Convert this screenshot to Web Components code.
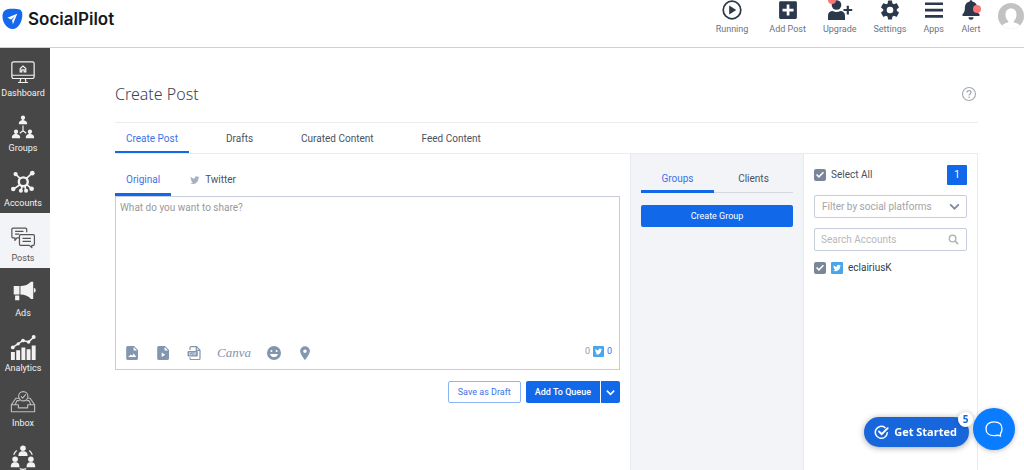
<!DOCTYPE html>
<html lang="en">
<head>
<meta charset="utf-8">
<meta name="viewport" content="width=device-width, initial-scale=1">
<title>SocialPilot - Create Post</title>
<style>
  html, body { margin: 0; height: 100%; }
  body {
    --blue: #1169ea;
    --link: #3c73ea;
    --ink: #485261;
    --muted: #999;
    --line: #c8cddb;
    --soft: #ebecf0;
    --panel: #f3f4f7;
    --tool: #8296b0;
    font: 10px/16px Roboto, "Liberation Sans", sans-serif;
    color: var(--ink);
    background: #fff;
    overflow: hidden;
  }
</style>
</head>
<body>
<sp-app></sp-app>

<script>
const person = (x, y) => `<circle cx="${x}" cy="${y}" r="2.3"/><path d="M${x - 4.5} ${y + 7}c0-3 1-4 3.2-4.4L${x - 1} ${y + 1}h2l-.3 1.6c2.600.4 3.800 1.400 3.800 4.400z"/>`;
const BIRD = 'M23.6 4.900a10 10 0 0 1-2.800.8 4.900 4.900 0 0 0 2.100-2.700c-1 .6-2 1-3.100 1.200a4.900 4.900 0 0 0-8.400 4.500A14 14 0 0 1 1.300 3.500a4.900 4.900 0 0 0 1.500 6.600c-.8 0-1.600-.2-2.200-.6a4.900 4.900 0 0 0 3.900 4.900c-.7.2-1.500.2-2.200.1a4.900 4.900 0 0 0 4.600 3.400A9.900 9.900 0 0 1-.4 20a14 14 0 0 0 21.500-12.400c1-.8 1.800-1.700 2.500-2.700z';
const ICONS = {
  logo: ['0 0 22 22', '<path d="M11 .3c6.500 0 10.300.3 10.300 6.300 0 7-4 14.900-10.300 14.900S.5 14.500.5 8.200C.5 1.600 4.500.3 11 .3z" fill="#1568ee"/><path d="M16 5.500 5.600 9.800l4 1.600L13.500 8l-2.900 4.400.8 4z" fill="#fff"/>'],
  running: ['0 0 20 20', '<circle cx="10" cy="10" r="8.800" fill="none" stroke="currentColor" stroke-width="1.700"/><path d="M7.200 5.600v8.800L14.300 10z"/>'],
  add: ['0 0 20 20', '<path fill-rule="evenodd" d="M2.500 1.200h15a1.400 1.400 0 0 1 1.400 1.400v15a1.400 1.400 0 0 1-1.400 1.400h-15a1.400 1.400 0 0 1-1.400-1.400v-15a1.400 1.400 0 0 1 1.400-1.400zM8.700 4.500v4.200H4.500v2.700h4.200v4.200h2.700v-4.200h4.200V8.700h-4.200V4.500z"/>'],
  upgrade: ['0 0 26 20', '<circle cx="9.500" cy="5" r="4.800"/><path d="M1 20v-4.300c0-3 2-4.600 4.600-4.600 1.300.7 2.500 1 3.900 1s2.600-.3 3.900-1c2.600 0 4.600 1.600 4.600 4.600V20zM19.700 5.700h2.200v3.200h3.300v2.200h-3.300v3.300h-2.200v-3.300h-3.200V8.900h3.200z"/>'],
  settings: ['0 0 24 24', '<path d="M20.100 13c.1-.6.1-1.300 0-2l2.300-1.800c.3-.2.4-.6.200-.9l-2.300-4c-.2-.3-.5-.4-.8-.3l-2.800 1.100c-.6-.5-1.200-.8-1.900-1.100l-.4-3a.7.700 0 0 0-.7-.5h-3.400c-.3 0-.6.200-.7.600l-.4 3c-.7.300-1.300.6-1.900 1.100L4.500 4a.7.700 0 0 0-.8.300l-2.300 4c-.2.300-.1.700.2.900L3.900 11v2l-2.300 1.800c-.3.200-.3.600-.2.900l2.300 4c.2.300.5.400.8.300l2.800-1.100c.6.5 1.200.8 1.900 1.100l.4 3c.1.300.4.500.7.500h3.400c.3 0 .6-.2.700-.5l.4-3c.7-.3 1.300-.6 1.900-1.100l2.800 1.100c.3.100.6 0 .8-.3l2.300-4c.2-.3.100-.7-.2-.9zM12 16a4 4 0 1 1 0-8 4 4 0 0 1 0 8z"/>'],
  apps: ['0 0 20 20', '<path d="M1 2.500h18v2.600H1zM1 8.800h18v2.600H1zM1 15.100h18v2.600H1z"/>'],
  alert: ['0 0 20 20', '<path d="M10 .2c.8 0 1.300.5 1.300 1.300 3 .6 4.800 2.900 4.800 5.800 0 4.200 1 5.700 2.300 7 .6.700.2 1.700-.8 1.700H2.400c-1 0-1.400-1-.8-1.700 1.300-1.300 2.300-2.800 2.300-7 0-2.900 1.800-5.200 4.800-5.800C8.700.7 9.200.2 10 .2zM7.500 17.300h5a2.500 2.500 0 0 1-5 0z"/>'],
  avatar: ['0 0 26 26', '<defs><clipPath id="c"><circle cx="13" cy="13" r="13"/></clipPath></defs><g clip-path="url(#c)"><path fill="#c2c2c2" d="M0 0h26v26H0z"/><path fill="#fff" d="M13 5.500c3.600 0 5.500 2.500 5.500 6 0 3-1.200 5.400-2.700 6.600v1.400c4 .8 7 2.200 7 6.500H3.200c0-4.300 3-5.700 7-6.500v-1.400c-1.500-1.200-2.700-3.600-2.700-6.600 0-3.500 1.900-6 5.500-6z"/></g>'],
  help: ['0 0 16 16', '<g fill="none" stroke="currentColor" stroke-width="1.100"><circle cx="8" cy="8" r="6.500"/><path d="M6 6.600c0-1.300.9-2 2-2s2 .7 2 1.800c0 1.400-1.900 1.600-1.900 3.100" stroke-width="1.300"/></g><circle cx="8.100" cy="11.300" r=".8"/>'],
  dashboard: ['0 0 28 26', '<g fill="none" stroke="currentColor" stroke-width="1.300"><rect x="2" y="2" width="24" height="18" rx="1.800"/><path d="M2 16.500h24M11.500 20l-.6 3.800M16.500 20l.6 3.800M8.700 24.300h10.600M11 12.800V9.300l3-2.700 3 2.700v3.500h-1.700v-2h-2.600v2z"/></g>'],
  groups: ['0 0 28 28', person(14, 4) + person(6.500, 19) + person(21.500, 19) + '<path d="M14 12.500v5.500M14 18l-3.500 2.800M14 18l3.500 2.800" fill="none" stroke="currentColor" stroke-width="1.300"/>'],
  accounts: ['0 0 28 28', '<g fill="none" stroke="currentColor"><circle cx="14.300" cy="13.800" r="4.800" stroke-width="2.600"/><path stroke-width="1.800" d="M10.800 10 6.500 6M17.700 10l5-4.500M10.600 17l-6 4.200M13 18.500l-1 4.500M16 18.500l1 4.500M18 16.500l4.500 4"/></g><circle cx="6" cy="5.500" r="2.300"/><circle cx="24" cy="4.500" r="2.500"/><circle cx="3.500" cy="21.500" r="2.400"/><circle cx="11.700" cy="23.500" r="2.200"/><circle cx="17.300" cy="23.500" r="2.200"/><circle cx="23.300" cy="21.300" r="2.500"/>'],
  posts: ['0 0 28 26', '<g fill="none" stroke="currentColor" stroke-width="1.300" stroke-linejoin="round"><path d="M10 14H7.500L5.300 16.700V14H3.300A1.300 1.300 0 0 1 2 12.700V4.800a1.300 1.300 0 0 1 1.300-1.300h13.400A1.300 1.300 0 0 1 18 4.800V8M5.500 7h9M5.500 10h4.500"/><path d="M11.500 10.500H25a1.300 1.300 0 0 1 1.300 1.300v8.900A1.300 1.300 0 0 1 25 22h-1.500v2.500L20.800 22h-9.300a1.300 1.300 0 0 1-1.300-1.300v-8.900a1.300 1.300 0 0 1 1.300-1.300zM13.500 14.500h9M13.500 17.700h9"/></g>'],
  ads: ['0 0 28 26', '<path d="M4 6.500h6.200v9.300H4zM11.200 6.500C16 6.500 20 5 22.500 2H25v18.500h-2.500c-2.500-3-6.500-4.700-11.300-4.700zM5.500 16.800H10V22H5.500zM25.700 8.600c1.500.3 2 1.200 2 2.600s-.5 2.300-2 2.600z"/>'],
  analytics: ['0 0 28 28', '<path d="M1 19.500h4.200V28H1zM6.700 17.500h4.200V28H6.700zM12.300 14.500h4.200V28h-4.200zM17.900 16.500h4.200V28h-4.200zM23.400 12.500h4.200V28h-4.200z"/><path d="M3 14.500 14 7l6 1.500L25.500 3.500" fill="none" stroke="currentColor" stroke-width="1.600"/><circle cx="3" cy="14.500" r="2"/><circle cx="8.800" cy="10.600" r="1.700"/><circle cx="14" cy="7" r="2"/><circle cx="20" cy="8.500" r="1.900"/><circle cx="25.500" cy="3.300" r="2.100"/>'],
  inbox: ['0 0 28 26', '<g fill="none" stroke="#bfbfbf" stroke-width="1.200" stroke-linejoin="round"><path d="M9.500 9H6.300L1.500 16v7.500h25V16L21.700 9h-2.200M1.500 16H9v3.300h10V16h7.500M5.500 16l2-4.500h2.800M22.500 16l-2-4.500h-2.800"/><circle cx="14.300" cy="6.800" r="5"/><path d="m11.800 7 1.800 1.900 3.400-4"/></g>'],
  team: ['0 0 28 28', '<circle cx="14" cy="4.500" r="3"/><path d="M9 13c0-3.500 1.500-5 3.600-5.300h2.800C17.500 8 19 9.500 19 13z"/><circle cx="5.500" cy="16.500" r="3"/><path d="M.8 25c0-3.500 1.500-5 3.300-5.300h2.800c2 .3 3.300 1.800 3.300 5.300z"/><circle cx="22.500" cy="16.500" r="3"/><path d="M17.800 25c0-3.500 1.500-5 3.300-5.300h2.800c2 .3 3.300 1.800 3.300 5.300z"/><path d="M4 11.500c.8-2 1.600-3.200 3.200-4.500M24 11.500c-.8-2-1.600-3.200-3.200-4.500M10.500 26.500c2.300 1 4.700 1 7 0" fill="none" stroke="currentColor" stroke-width="1.300"/>'],
  twitter: ['-1 1 26 22', `<path d="${BIRD}"/>`],
  twitterBox: ['0 0 24 24', `<rect width="24" height="24" rx="2" fill="#4aa6ec"/><path transform="translate(4.500 4) scale(.65)" fill="#fff" d="${BIRD}"/>`],
  image: ['0 0 14 16', '<path fill-rule="evenodd" d="M2.500 1H9l4 4v8.600a1.400 1.400 0 0 1-1.400 1.400h-9A1.400 1.400 0 0 1 1.200 13.600V2.400A1.400 1.400 0 0 1 2.500 1zM8.600 2v3.500H12zM3.200 12h8L8.800 8.500l-1.700 2.300L5.800 9.500z"/>'],
  video: ['0 0 14 16', '<path fill-rule="evenodd" d="M2.500 1H9l4 4v8.600a1.400 1.400 0 0 1-1.400 1.400h-9A1.400 1.400 0 0 1 1.200 13.600V2.400A1.400 1.400 0 0 1 2.500 1zM8.600 2v3.500H12zM5.700 7.500v4.600l3.500-2.300z"/>'],
  gif: ['0 0 14 16', '<path d="M3 5V2.700a1 1 0 0 1 1-1h5.500l3.500 3.500V13.500a1 1 0 0 1-1 1H4a1 1 0 0 1-1-1V12.500M9.300 1.700v3.600H13" fill="none" stroke="currentColor" stroke-width="1.200"/><rect x=".5" y="6" width="10.300" height="5.500" rx="1"/><path d="M4.400 7.700H2.500v2.200h1.900V8.900M6 7.200v3.100M9.200 7.700H7.700v2.600M7.700 8.900h1.300" fill="none" stroke="#fff" stroke-width=".6"/>'],
  smile: ['0 0 16 16', '<path fill-rule="evenodd" d="M8 1a7 7 0 1 1 0 14A7 7 0 0 1 8 1zM5.400 5.100a1 1 0 1 0 0 2 1 1 0 0 0 0-2zm5.200 0a1 1 0 1 0 0 2 1 1 0 0 0 0-2zM4 9c.5 2 2 3.100 4 3.100S11.500 11 12 9z"/>'],
  pin: ['0 0 14 16', '<path fill-rule="evenodd" d="M7 1.200a4.900 4.900 0 0 1 4.900 4.900C11.900 9.500 7 15.200 7 15.200S2.100 9.500 2.100 6.100A4.900 4.900 0 0 1 7 1.200zm0 3.200a1.800 1.800 0 1 0 0 3.600 1.800 1.800 0 0 0 0-3.600z"/>'],
  chevron: ['0 0 12 12', '<path d="m2 4 4 4 4-4" fill="none" stroke="currentColor" stroke-width="1.700"/>'],
  search: ['0 0 12 12', '<circle cx="5" cy="5" r="3.600" fill="none" stroke="currentColor" stroke-width="1.600"/><path d="m7.600 7.600 3.400 3.400" stroke="currentColor" stroke-width="1.900"/>'],
  check: ['0 0 16 16', '<g fill="none" stroke="currentColor" stroke-width="1.500" stroke-linecap="round"><path d="M13.300 8.800a6 6 0 1 1-2.300-5.200"/><path d="m5 7.500 2.700 2.700 6-6" stroke-width="1.900"/></g>'],
  chat: ['0 0 20 18', '<path d="M16.500 13.500v2.700l-2.500-1c-1 .4-2.500.5-4 .5-5 0-8-2.800-8-7S5 1.800 10 1.800s8 2.700 8 6.900c0 1.800-.5 3.500-1.500 4.800z" fill="none" stroke="currentColor" stroke-width="1.300" stroke-linejoin="round"/>']
};

function define(name, css, html) {
  const tpl = document.createElement('template');
  tpl.innerHTML = `<style>*{box-sizing:border-box}button{font:inherit;color:inherit;background:none;border:0;padding:0;margin:0;cursor:pointer}a{color:inherit;text-decoration:none}${css}</style>${html}`;
  customElements.define(name, class extends HTMLElement {
    constructor() {
      super();
      this.attachShadow({ mode: 'open' }).append(tpl.content.cloneNode(true));
    }
  });
}

customElements.define('sp-icon', class extends HTMLElement {
  connectedCallback() {
    if (this.shadowRoot) return;
    const [box, body] = ICONS[this.getAttribute('name')];
    this.attachShadow({ mode: 'open' }).innerHTML =
      `<style>:host{display:inline-flex;flex:none;width:14px;height:14px}svg{width:100%;height:100%;fill:currentColor}</style><svg viewBox="${box}" aria-hidden="true">${body}</svg>`;
  }
});

define('sp-action', `
  :host { display: block; font-size: 9px; line-height: 12px; color: #6c7480; }
  button { display: flex; flex-direction: column; align-items: center; gap: 3px; }
  .glyph { position: relative; display: flex; color: #2c384b; }
  ::slotted(sp-icon) { width: 20px; height: 20px; }
  :host([wide]) ::slotted(sp-icon) { width: 26px; }
  :host([dot]) .glyph::after { content: ""; position: absolute; width: 8px; height: 8px; border-radius: 50%; background: #fc7676; }
  :host([dot="left"]) .glyph::after { left: 1px; top: -4px; }
  :host([dot="right"]) .glyph::after { right: 0; top: 5px; }`,
  `<button type="button"><span class="glyph"><slot name="icon"></slot></span><slot></slot></button>`);

define('sp-header', `
  :host { display: flex; align-items: flex-start; justify-content: space-between; flex: none; height: 48px; padding-left: 2px; border-bottom: 1px solid #cfcfe0; }
  .brand { display: flex; align-items: center; gap: 5px; padding-top: 8px; font: 600 17px/22px Inter, sans-serif; color: #17181c; }
  .brand sp-icon { width: 21px; height: 22px; }
  nav { display: flex; gap: 17px; }
  nav sp-action:first-child { margin-right: 4px; }
  .me { width: 26px; height: 26px; margin-top: 3px; }
  .me sp-icon { width: 26px; height: 26px; }`,
  `<a class="brand" href="#"><sp-icon name="logo"></sp-icon><span>SocialPilot</span></a>
   <nav>
    <sp-action><sp-icon slot="icon" name="running"></sp-icon>Running</sp-action>
    <sp-action><sp-icon slot="icon" name="add"></sp-icon>Add Post</sp-action>
    <sp-action wide dot="left"><sp-icon slot="icon" name="upgrade"></sp-icon>Upgrade</sp-action>
    <sp-action><sp-icon slot="icon" name="settings"></sp-icon>Settings</sp-action>
    <sp-action><sp-icon slot="icon" name="apps"></sp-icon>Apps</sp-action>
    <sp-action dot="right"><sp-icon slot="icon" name="alert"></sp-icon>Alert</sp-action>
    <button class="me" type="button" aria-label="Account"><sp-icon name="avatar"></sp-icon></button>
   </nav>`);

define('sp-side-item', `
  :host { display: block; flex: none; height: 55px; color: #f2f2f2; font-size: 9px; line-height: 12px; }
  a { display: flex; flex-direction: column; align-items: center; gap: 2px; padding-top: 11px; height: 100%; margin-right: 4px; }
  ::slotted(sp-icon) { width: 26px; height: 26px; }
  :host([active]) { background: #f3f4f7; color: #555; }`,
  `<a href="#"><slot name="icon"></slot><slot></slot></a>`);

define('sp-sidebar', `
  :host { display: flex; flex-direction: column; flex: none; width: 50px; background: #474747; overflow: hidden; }`,
  ['Dashboard', 'Groups', 'Accounts', 'Posts', 'Ads', 'Analytics', 'Inbox'].map(n =>
    `<sp-side-item${n === 'Posts' ? ' active' : ''}><sp-icon slot="icon" name="${n.toLowerCase()}"></sp-icon>${n}</sp-side-item>`).join('') +
    '<sp-side-item aria-label="Team"><sp-icon slot="icon" name="team"></sp-icon></sp-side-item>');

define('sp-tab', `
  :host { display: block; }
  button { display: flex; align-items: center; justify-content: center; gap: 5px; width: 100%; height: 100%; padding: 2px 11px 0; border-bottom: 3px solid transparent; white-space: nowrap; }
  :host([active]) button { color: var(--link); border-bottom-color: var(--blue); }`,
  `<button type="button" role="tab"><slot></slot></button>`);

define('sp-editor', `
  :host { display: block; padding: 11px 10px 0 0; }
  .tabs { display: flex; gap: 8px; height: 31px; }
  .tabs sp-icon { width: 10px; height: 10px; color: #a3b1c4; }
  .box { border: 1px solid var(--line); display: flex; flex-direction: column; height: 174px; }
  textarea { flex: 1; border: 0; padding: 3px 4px; resize: none; outline: 0; font: inherit; color: inherit; background: none; }
  textarea::placeholder { color: var(--muted); }
  .tools { display: flex; align-items: center; gap: 15px; height: 32px; padding: 0 7px 0 8px; color: var(--tool); }
  .tools button { display: flex; }
  .tools button sp-icon { width: 16px; height: 16px; }
  .tools .canva { font: italic 13px/16px "Liberation Serif", serif; }
  .count { display: flex; align-items: center; gap: 3px; margin: 0 0 4px auto; font-size: 9px; color: var(--muted); }
  .count sp-icon { width: 11px; height: 11px; }
  .count b { font-weight: 400; color: var(--link); }
  .actions { display: flex; justify-content: flex-end; margin-top: 11px; font-size: 9px; }
  .actions button { height: 22px; border-radius: 2px; padding: 0 9px; }
  .draft { border: 1px solid #8cb5f5; color: var(--link); margin-right: 5px; }
  .queue, .more { background: var(--blue); color: #fff; }
  .actions .queue { border-radius: 2px 0 0 2px; font-weight: 500; }
  .actions .more { display: flex; align-items: center; border-radius: 0 2px 2px 0; margin-left: 1px; padding: 0 4px; }
  .more sp-icon { width: 11px; height: 11px; }`,
  `<div class="tabs" role="tablist"><sp-tab active>Original</sp-tab><sp-tab><sp-icon name="twitter"></sp-icon>Twitter</sp-tab></div>
   <div class="box">
    <textarea aria-label="Post text" placeholder="What do you want to share?"></textarea>
    <div class="tools">
      <button type="button" aria-label="Add image"><sp-icon name="image"></sp-icon></button>
      <button type="button" aria-label="Add video"><sp-icon name="video"></sp-icon></button>
      <button type="button" aria-label="Add GIF"><sp-icon name="gif"></sp-icon></button>
      <button type="button" class="canva">Canva</button>
      <button type="button" aria-label="Add emoji"><sp-icon name="smile"></sp-icon></button>
      <button type="button" aria-label="Add location"><sp-icon name="pin"></sp-icon></button>
      <span class="count">0<sp-icon name="twitterBox"></sp-icon><b>0</b></span>
    </div>
   </div>
   <div class="actions">
    <button type="button" class="draft">Save as Draft</button>
    <button type="button" class="queue">Add To Queue</button>
    <button type="button" class="more" aria-label="More options"><sp-icon name="chevron"></sp-icon></button>
   </div>`);

define('sp-groups', `
  :host { display: block; padding: 11px 10px; background: var(--panel); border: solid #e9eaef; border-width: 0 1px; }
  .tabs { display: grid; grid-template-columns: 73px 1fr; height: 28px; box-shadow: inset 0 -1px #d5d9e2; }
  .create { display: block; width: 100%; height: 22px; margin-top: 12px; border-radius: 2px; background: var(--blue); color: #fff; font-size: 9px; }`,
  `<div class="tabs" role="tablist"><sp-tab active>Groups</sp-tab><sp-tab>Clients</sp-tab></div>
   <button type="button" class="create">Create Group</button>`);

define('sp-accounts', `
  :host { display: block; padding: 11px 10px; border-right: 1px solid var(--soft); }
  .row { display: flex; align-items: center; justify-content: space-between; height: 20px; }
  label { display: flex; align-items: center; gap: 5px; }
  input[type=checkbox] { appearance: none; display: grid; place-items: center; width: 12px; height: 12px; margin: 0; border-radius: 2px; background: #7b8698; }
  input[type=checkbox]:checked::before { content: ""; width: 8px; height: 8px; background: #fff; clip-path: polygon(0 50%, 14% 36%, 36% 58%, 86% 8%, 100% 22%, 36% 86%); }
  .total { width: 20px; line-height: 20px; border-radius: 1px; background: var(--blue); color: #fff; text-align: center; }
  .field { display: flex; align-items: center; height: 23px; margin-top: 10px; border: 1px solid var(--line); border-radius: 2px; padding: 0 7px 0 6px; }
  .field select, .field input { appearance: none; flex: 1; min-width: 0; border: 0; padding: 0; outline: 0; background: none; font: inherit; color: #a3a3a3; }
  .field input::placeholder { color: #b8b8b8; }
  .field select { padding-left: 1px; }
  .field sp-icon { width: 11px; height: 11px; color: #7f8ba3; pointer-events: none; }
  .field .down { width: 13px; height: 13px; margin-right: -2px; }
  .field .find { color: #b5b5b5; }
  .accounts { margin-top: 7px; }
  .accounts sp-icon { width: 12px; height: 12px; }
  .accounts span { color: #333c49; }`,
  `<div class="row"><label><input type="checkbox" checked><span>Select All</span></label><span class="total">1</span></div>
   <div class="field"><select aria-label="Filter by social platforms"><option>Filter by social platforms</option></select><sp-icon class="down" name="chevron"></sp-icon></div>
   <div class="field"><input type="text" aria-label="Search Accounts" placeholder="Search Accounts"><sp-icon class="find" name="search"></sp-icon></div>
   <div class="row accounts"><label><input type="checkbox" checked><sp-icon name="twitterBox"></sp-icon><span>eclairiusK</span></label></div>`);

define('sp-help', `
  :host { position: fixed; right: 9px; bottom: 20px; display: flex; align-items: center; gap: 4px; color: #fff; font: 700 11px/16px "Open Sans", sans-serif; }
  .start { position: relative; display: flex; align-items: center; gap: 4px; height: 30px; margin-top: 5px; padding: 0 12px 0 10px; border-radius: 15px; background: #1766dc; box-shadow: 0 1px 6px rgba(0,0,0,.35); }
  .start sp-icon { width: 16px; height: 16px; }
  .badge { position: absolute; right: -4px; top: -5px; width: 15px; line-height: 15px; border-radius: 50%; background: #fff; color: #1766dc; font-size: 10px; text-align: center; box-shadow: 0 0 4px rgba(0,0,0,.25); }
  .chat { display: flex; align-items: center; justify-content: center; width: 42px; height: 42px; border-radius: 50%; background: #0a7cff; box-shadow: 0 1px 5px rgba(0,0,0,.25); }
  .chat sp-icon { width: 20px; height: 18px; }`,
  `<button type="button" class="start"><sp-icon name="check"></sp-icon>Get Started<span class="badge">5</span></button>
   <button type="button" class="chat" aria-label="Open chat"><sp-icon name="chat"></sp-icon></button>`);

define('sp-app', `
  :host { display: flex; flex-direction: column; height: 100vh; overflow: hidden; }
  .body { display: flex; flex: 1; min-height: 0; }
  main { flex: 1; display: flex; flex-direction: column; min-width: 0; padding: 34px 46px 0 65px; }
  .title { display: flex; align-items: center; justify-content: space-between; height: 24px; padding-right: 1px; }
  h1 { margin: 0; font: 300 16px/24px "Noto Sans", sans-serif; color: #3a4554; }
  .title button { display: flex; }
  .title sp-icon { width: 16px; height: 16px; color: #a3a8ae; }
  .tabs { display: flex; gap: 26px; height: 32px; margin-top: 16px; border-top: 1px solid var(--soft); }
  .tabs sp-tab { padding-top: 2px; }
  .cols { display: grid; grid-template-columns: minmax(0, 1fr) 174px 174px; flex: 1; margin-top: -1px; border-top: 1px solid var(--soft); }`,
  `<sp-header></sp-header>
   <div class="body">
    <sp-sidebar></sp-sidebar>
    <main>
      <div class="title"><h1>Create Post</h1><button type="button" aria-label="Help"><sp-icon name="help"></sp-icon></button></div>
      <div class="tabs" role="tablist"><sp-tab active>Create Post</sp-tab><sp-tab>Drafts</sp-tab><sp-tab>Curated Content</sp-tab><sp-tab>Feed Content</sp-tab></div>
      <div class="cols"><sp-editor></sp-editor><sp-groups></sp-groups><sp-accounts></sp-accounts></div>
    </main>
   </div>
   <sp-help></sp-help>`);
</script>
</body>
</html>
